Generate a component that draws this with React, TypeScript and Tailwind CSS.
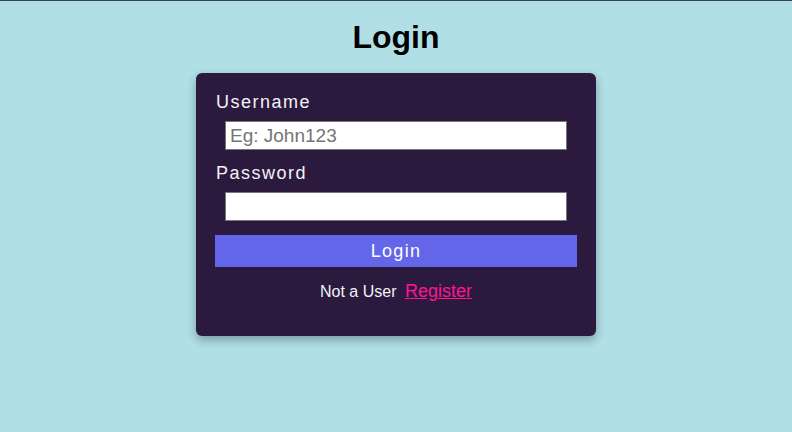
export default function App() {
  return (
    <div className="min-h-screen border-t border-[#37474f] bg-[#b0dfe5] font-['Liberation_Sans',Arial,sans-serif]">
      <h1 className="mt-[18px] text-center text-[32px] font-bold leading-[37px] text-black">
        Login
      </h1>
      <div className="mx-auto mt-[17px] flex w-[400px] flex-col rounded-md bg-[#2c1a3e] px-[19px] pb-[35px] pt-[19px] shadow-[0_4px_10px_rgba(0,0,0,0.3)]">
        <label className="pl-[1px] text-[18px] leading-[21px] tracking-[1.5px] text-[#f2f2f7]">
          Username
        </label>
        <input
          type="text"
          placeholder="Eg: John123"
          className="mx-[10px] mt-[8px] h-[29px] border border-[#767676] bg-white px-[4px] text-[19px] text-black outline-none placeholder:text-[#757575]"
        />
        <label className="mt-[13px] pl-[1px] text-[18px] leading-[21px] tracking-[1.5px] text-[#f2f2f7]">
          Password
        </label>
        <input
          type="password"
          className="mx-[10px] mt-[8px] h-[29px] border border-[#767676] bg-white px-[4px] text-[19px] text-black outline-none"
        />
        <button className="mt-[14px] h-[32px] bg-[#6366e9] text-[18px] tracking-[1.3px] text-white">
          Login
        </button>
        <p className="mt-[15px] text-center text-[16px] leading-[18px] text-[#f2f2f7]">
          Not a User{" "}
          <a href="#" className="ml-[4px] text-[18px] text-[#ff1493] underline">
            Register
          </a>
        </p>
      </div>
    </div>
  );
}
